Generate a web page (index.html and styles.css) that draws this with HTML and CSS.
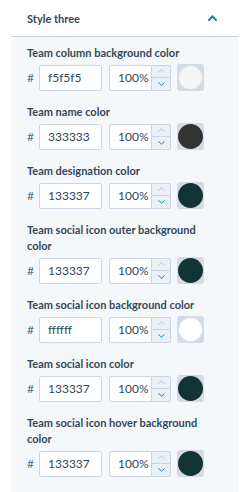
FILE: index.html
```html
<!DOCTYPE html>
<html lang="en">
<head>
  <meta charset="UTF-8">
  <title>Style three</title>
  <link rel="stylesheet" href="styles.css">
</head>
<body>
<div class="style-panel">
  <div class="section-head">
    <span class="section-title">Style three</span>
    <svg class="chevron" width="9" height="6" viewBox="0 0 9 6"><path d="M1 5 L4.5 1.5 L8 5" fill="none" stroke="#0091ae" stroke-width="2" stroke-linecap="round"/></svg>
  </div>
  <div class="section-body">
    <div class="field">
      <div class="label">Team column background color</div>
      <div class="picker">
        <span class="hash">#</span>
        <input class="hex" value="f5f5f5">
        <div class="alpha">
          <input class="pct" value="100%">
          <div class="stepper">
            <span class="step up"><svg width="7" height="4" viewBox="0 0 7 4"><path d="M0.5 3.5 L3.5 0.8 L6.5 3.5" fill="none" stroke="#b8c6d4" stroke-width="1"/></svg></span>
            <span class="step down"><svg width="7" height="4" viewBox="0 0 7 4"><path d="M0.5 0.5 L3.5 3.2 L6.5 0.5" fill="none" stroke="#0091ae" stroke-width="1"/></svg></span>
          </div>
        </div>
        <div class="swatch"><div class="dot light" style="background:#f5f5f5"></div></div>
      </div>
    </div>

    <div class="field">
      <div class="label">Team name color</div>
      <div class="picker">
        <span class="hash">#</span>
        <input class="hex" value="333333">
        <div class="alpha">
          <input class="pct" value="100%">
          <div class="stepper">
            <span class="step up"><svg width="7" height="4" viewBox="0 0 7 4"><path d="M0.5 3.5 L3.5 0.8 L6.5 3.5" fill="none" stroke="#b8c6d4" stroke-width="1"/></svg></span>
            <span class="step down"><svg width="7" height="4" viewBox="0 0 7 4"><path d="M0.5 0.5 L3.5 3.2 L6.5 0.5" fill="none" stroke="#0091ae" stroke-width="1"/></svg></span>
          </div>
        </div>
        <div class="swatch"><div class="dot" style="background:#333333"></div></div>
      </div>
    </div>

    <div class="field">
      <div class="label">Team designation color</div>
      <div class="picker">
        <span class="hash">#</span>
        <input class="hex" value="133337">
        <div class="alpha">
          <input class="pct" value="100%">
          <div class="stepper">
            <span class="step up"><svg width="7" height="4" viewBox="0 0 7 4"><path d="M0.5 3.5 L3.5 0.8 L6.5 3.5" fill="none" stroke="#b8c6d4" stroke-width="1"/></svg></span>
            <span class="step down"><svg width="7" height="4" viewBox="0 0 7 4"><path d="M0.5 0.5 L3.5 3.2 L6.5 0.5" fill="none" stroke="#0091ae" stroke-width="1"/></svg></span>
          </div>
        </div>
        <div class="swatch"><div class="dot" style="background:#133337"></div></div>
      </div>
    </div>

    <div class="field">
      <div class="label">Team social icon outer background color</div>
      <div class="picker">
        <span class="hash">#</span>
        <input class="hex" value="133337">
        <div class="alpha">
          <input class="pct" value="100%">
          <div class="stepper">
            <span class="step up"><svg width="7" height="4" viewBox="0 0 7 4"><path d="M0.5 3.5 L3.5 0.8 L6.5 3.5" fill="none" stroke="#b8c6d4" stroke-width="1"/></svg></span>
            <span class="step down"><svg width="7" height="4" viewBox="0 0 7 4"><path d="M0.5 0.5 L3.5 3.2 L6.5 0.5" fill="none" stroke="#0091ae" stroke-width="1"/></svg></span>
          </div>
        </div>
        <div class="swatch"><div class="dot" style="background:#133337"></div></div>
      </div>
    </div>

    <div class="field">
      <div class="label">Team social icon background color</div>
      <div class="picker">
        <span class="hash">#</span>
        <input class="hex" value="ffffff">
        <div class="alpha">
          <input class="pct" value="100%">
          <div class="stepper">
            <span class="step up"><svg width="7" height="4" viewBox="0 0 7 4"><path d="M0.5 3.5 L3.5 0.8 L6.5 3.5" fill="none" stroke="#b8c6d4" stroke-width="1"/></svg></span>
            <span class="step down"><svg width="7" height="4" viewBox="0 0 7 4"><path d="M0.5 0.5 L3.5 3.2 L6.5 0.5" fill="none" stroke="#0091ae" stroke-width="1"/></svg></span>
          </div>
        </div>
        <div class="swatch"><div class="dot light" style="background:#ffffff"></div></div>
      </div>
    </div>

    <div class="field">
      <div class="label">Team social icon color</div>
      <div class="picker">
        <span class="hash">#</span>
        <input class="hex" value="133337">
        <div class="alpha">
          <input class="pct" value="100%">
          <div class="stepper">
            <span class="step up"><svg width="7" height="4" viewBox="0 0 7 4"><path d="M0.5 3.5 L3.5 0.8 L6.5 3.5" fill="none" stroke="#b8c6d4" stroke-width="1"/></svg></span>
            <span class="step down"><svg width="7" height="4" viewBox="0 0 7 4"><path d="M0.5 0.5 L3.5 3.2 L6.5 0.5" fill="none" stroke="#0091ae" stroke-width="1"/></svg></span>
          </div>
        </div>
        <div class="swatch"><div class="dot" style="background:#133337"></div></div>
      </div>
    </div>

    <div class="field">
      <div class="label">Team social icon hover background color</div>
      <div class="picker">
        <span class="hash">#</span>
        <input class="hex" value="133337">
        <div class="alpha">
          <input class="pct" value="100%">
          <div class="stepper">
            <span class="step up"><svg width="7" height="4" viewBox="0 0 7 4"><path d="M0.5 3.5 L3.5 0.8 L6.5 3.5" fill="none" stroke="#b8c6d4" stroke-width="1"/></svg></span>
            <span class="step down"><svg width="7" height="4" viewBox="0 0 7 4"><path d="M0.5 0.5 L3.5 3.2 L6.5 0.5" fill="none" stroke="#0091ae" stroke-width="1"/></svg></span>
          </div>
        </div>
        <div class="swatch"><div class="dot" style="background:#133337"></div></div>
      </div>
    </div>
  </div>
</div>
</body>
</html>
```

FILE: styles.css
```css
* {
    box-sizing: border-box;
}

html, body {
    width: 100%;
    height: 100%;
    margin: 0;
    padding: 0;
    background: #ffffff;
}

.style-panel {
    display: flex;
    flex-direction: column;
    height: 100%;
    padding: 0 4px 0 11px;
    font-family: 'Lato', Arial, sans-serif;
    color: #33475b;
}

.section-head {
    display: flex;
    flex-direction: row;
    align-items: center;
    justify-content: space-between;
    height: 37px;
    padding: 0 21px 0 16px;
    border-bottom: 1px solid #cbd6e2;
}

.section-title {
    font-size: 11px;
    font-weight: 700;
}

.section-body {
    flex: 1 1 0;
    padding: 8px 16px 0 16px;
    background: #f5f8fa;
}

.field {
    margin-bottom: 13px;
}

.field .label {
    font-size: 11px;
    font-weight: 700;
    line-height: 16px;
    margin-bottom: 3px;
}

.picker {
    display: flex;
    flex-direction: row;
    align-items: center;
}

.picker .hash {
    width: 12px;
    font-size: 12px;
    color: #516f90;
}

.picker input {
    height: 26px;
    margin: 0;
    padding: 0 2px 0 8px;
    border: 1px solid #cbd6e2;
    border-radius: 2px;
    background: #ffffff;
    font-family: 'Lato', Arial, sans-serif;
    font-size: 12px;
    font-weight: 400;
    color: #33475b;
    outline: none;
}

.picker .hex {
    width: 63px;
}

.picker .alpha {
    display: flex;
    flex-direction: row;
    margin-left: 7px;
}

.picker .pct {
    width: 43px;
    border-radius: 2px 0 0 2px;
}

.stepper {
    display: flex;
    flex-direction: column;
    width: 19px;
    height: 26px;
    border: 1px solid #cbd6e2;
    border-left: none;
    border-radius: 0 2px 2px 0;
    background: #eaf0f6;
}

.stepper .step {
    flex: 1 1 0;
    display: flex;
    align-items: center;
    justify-content: center;
}

.stepper .step.up {
    border-bottom: 1px solid #cbd6e2;
}

.swatch {
    display: flex;
    align-items: center;
    justify-content: center;
    width: 27px;
    height: 27px;
    margin-left: 6px;
    border-radius: 3px;
    background: #d3dce6;
}

.swatch .dot {
    width: 25px;
    height: 25px;
    border-radius: 50%;
}

.swatch .dot.light {
    border: 1px solid #d7dfe8;
}
```
